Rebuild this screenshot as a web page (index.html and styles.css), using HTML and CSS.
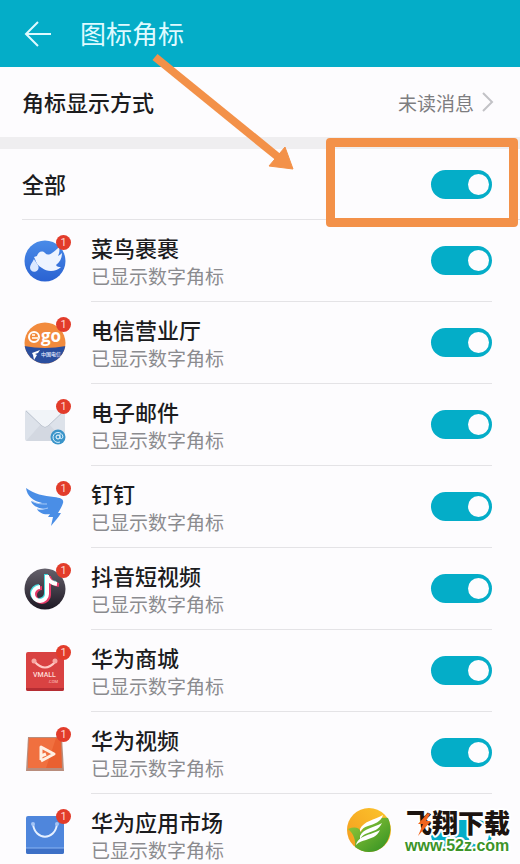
FILE: index.html
```
<!DOCTYPE html>
<html lang="zh-CN">
<head>
    <meta charset="UTF-8">
    <meta name="viewport" content="width=device-width, initial-scale=1.0">
    <title>图标角标</title>
    <link rel="stylesheet" href="styles.css">
</head>
<body>
    <header class="topbar">
        <button class="back" type="button" aria-label="返回">
            <svg width="28" height="28" viewBox="0 0 28 28" fill="none" stroke="#dffaff" stroke-width="2"><path d="M27 14H2M14 2L2 14l12 12"/></svg>
        </button>
        <h1>图标角标</h1>
    </header>

    <main>
        <a class="mode" href="#mode">
            <span class="title">角标显示方式</span>
            <span class="value">未读消息</span>
            <svg width="12" height="20" viewBox="0 0 12 20" fill="none" stroke="#c2c2c6" stroke-width="2"><path d="M1 1l9 9-9 9"/></svg>
        </a>

        <div class="all">
            <label class="title" for="sw-all">全部</label>
            <input class="switch" type="checkbox" id="sw-all" checked>
            <div class="highlight"></div>
        </div>

        <ul class="apps">
            <li class="app">
                <div class="icon">
                    <svg width="42" height="42" viewBox="0 0 42 42">
                        <defs><linearGradient id="gBlue" x1="0" y1="0" x2="0" y2="1"><stop offset="0" stop-color="#4a8be8"/><stop offset="1" stop-color="#2a62d2"/></linearGradient></defs>
                        <circle cx="21" cy="21" r="20.500" fill="url(#gBlue)"/>
                        <path d="M10 17l3-1c1-4 5-6 8-3 2 2 4 2 7 0 3-2 5-4 7-6 1 4 0 7-1 9 2-1 3-2 4-3 0 5-2 9-6 12 1 2 3 2 5 2-5 5-14 5-19 1-4-2-6-5-7-9z" fill="#eef4ff"/>
                        <path d="M10 19c-2 4-4 6-4 8.500a4.300 4.300 0 0 0 8.600 0c0-3-2.600-4.500-4.600-8.500z" fill="#dbe8ff"/>
                    </svg>
                    <span class="badge">1</span>
                </div>
                <div class="info">
                    <label class="title" for="sw-1">菜鸟裹裹</label>
                    <p>已显示数字角标</p>
                </div>
                <input class="switch" type="checkbox" id="sw-1" checked>
            </li>
            <li class="app">
                <div class="icon">
                    <svg width="42" height="42" viewBox="0 0 42 42">
                        <defs><clipPath id="disc"><circle cx="21" cy="21" r="20.500"/></clipPath></defs>
                        <g clip-path="url(#disc)">
                            <path d="M0 0h42v42H0z" fill="#f28b3d"/>
                            <path d="M0 24q21 4 42 0v18H0z" fill="#2a4e9e"/>
                        </g>
                        <text class="go" x="17" y="20">go</text>
                        <circle cx="10" cy="15" r="5" fill="none" stroke="#fff" stroke-width="2"/>
                        <path d="M8 13h3M8 16h7" stroke="#ffe6cf" stroke-width="2"/>
                        <path d="M8 31l8-3-2 3-3 1 2 1-3 5-1-5z" fill="#fff"/>
                        <text class="telecom" x="17" y="34">中国电信</text>
                    </svg>
                    <span class="badge">1</span>
                </div>
                <div class="info">
                    <label class="title" for="sw-2">电信营业厅</label>
                    <p>已显示数字角标</p>
                </div>
                <input class="switch" type="checkbox" id="sw-2" checked>
            </li>
            <li class="app">
                <div class="icon">
                    <svg width="42" height="42" viewBox="0 0 42 42">
                        <rect x="1" y="6" width="40" height="31" rx="2" fill="#dde2ea"/>
                        <path d="M2 37l15-17h8l15 17z" fill="#d3d8e1"/>
                        <path d="M2 6h38L24 22q-3 3-6 0z" fill="#f1f4f8"/>
                        <path d="M2 7l16 15q3 3 6 0L40 7" fill="none" stroke="#bfc6d1"/>
                        <circle cx="34" cy="33" r="7.500" fill="#3a94c9"/>
                        <circle cx="34" cy="33" r="2" fill="none" stroke="#fff"/>
                        <path d="M36 30v4q2 2 3-1a5 5 0 1 0-3 5" fill="none" stroke="#d8f0ff"/>
                    </svg>
                    <span class="badge">1</span>
                </div>
                <div class="info">
                    <label class="title" for="sw-3">电子邮件</label>
                    <p>已显示数字角标</p>
                </div>
                <input class="switch" type="checkbox" id="sw-3" checked>
            </li>
            <li class="app">
                <div class="icon">
                    <svg width="42" height="42" viewBox="0 0 42 42">
                        <path d="M2 2c8 6 18 8 28 9 7 1 10 2 9 6-1 3-3 7-5 10h3c-3 5-6 8-10 13l2-9h-5l2-3c-6 1-11-1-13-5 3 1 5 1 7 0-7-1-12-4-13-8 4 2 7 3 11 2C9 15 3 10 2 2z" fill="#4a8ee6"/>
                        <path d="M8 15c5 3 9 3 15 3M13 23c4 1 7 0 11-1" fill="none" stroke="#a9cbf8"/>
                    </svg>
                    <span class="badge">1</span>
                </div>
                <div class="info">
                    <label class="title" for="sw-4">钉钉</label>
                    <p>已显示数字角标</p>
                </div>
                <input class="switch" type="checkbox" id="sw-4" checked>
            </li>
            <li class="app">
                <div class="icon">
                    <svg width="42" height="42" viewBox="0 0 42 42">
                        <defs><linearGradient id="gDark" x1="0" y1="0" x2="0" y2="1"><stop offset="0" stop-color="#65616b"/><stop offset="1" stop-color="#1e1824"/></linearGradient></defs>
                        <circle cx="21" cy="21" r="20.500" fill="url(#gDark)"/>
                        <g fill="none" stroke-width="4">
                            <path d="M23 7v19a7 7 0 1 1-7-7M23 8q2 7 10 8" stroke="#45d9dc" transform="translate(-1 -1)"/>
                            <path d="M23 7v19a7 7 0 1 1-7-7M23 8q2 7 10 8" stroke="#e63a68" transform="translate(2 1)"/>
                            <path d="M23 7v19a7 7 0 1 1-7-7M23 8q2 7 10 8" stroke="#fff"/>
                        </g>
                    </svg>
                    <span class="badge">1</span>
                </div>
                <div class="info">
                    <label class="title" for="sw-5">抖音短视频</label>
                    <p>已显示数字角标</p>
                </div>
                <input class="switch" type="checkbox" id="sw-5" checked>
            </li>
            <li class="app">
                <div class="icon">
                    <svg width="42" height="42" viewBox="0 0 42 42">
                        <rect x="2" y="2" width="38" height="39" rx="2" fill="#d94242"/>
                        <path d="M2 38h38v1q0 2-2 2H4q-2 0-2-2z" fill="#b52d33"/>
                        <path d="M10 11q11 13 22 0" fill="none" stroke="#ffc9c4" stroke-width="2"/>
                        <circle cx="10" cy="11" r="2.500" fill="#f6a9a4"/><circle cx="31" cy="11" r="2.500" fill="#f6a9a4"/>
                        <text class="vmall" x="9" y="27">VMALL</text>
                        <text class="vcom" x="24" y="33">.COM</text>
                    </svg>
                    <span class="badge">1</span>
                </div>
                <div class="info">
                    <label class="title" for="sw-6">华为商城</label>
                    <p>已显示数字角标</p>
                </div>
                <input class="switch" type="checkbox" id="sw-6" checked>
            </li>
            <li class="app">
                <div class="icon">
                    <svg width="42" height="42" viewBox="0 0 42 42">
                        <path d="M4 5h34l2 34H2z" fill="#b98d7d"/>
                        <path d="M5 6h32l1 30H4z" fill="#ea6030"/>
                        <path d="M5 6h27L22 36H4z" fill="#f0703f"/>
                        <path d="M17 28V15l13 7-13 7M17 24l5-2" fill="none" stroke="#fff0e4" stroke-width="3" stroke-linejoin="round"/>
                    </svg>
                    <span class="badge">1</span>
                </div>
                <div class="info">
                    <label class="title" for="sw-7">华为视频</label>
                    <p>已显示数字角标</p>
                </div>
                <input class="switch" type="checkbox" id="sw-7" checked>
            </li>
            <li class="app">
                <div class="icon">
                    <svg width="42" height="42" viewBox="0 0 42 42">
                        <rect x="2" y="2" width="38" height="38" rx="2" fill="#4f86dc"/>
                        <path d="M2 34h38v4q0 2-2 2H4q-2 0-2-2z" fill="#3d70c6"/>
                        <path d="M2 34h38" stroke="#8bb4f2"/>
                        <path d="M9 10c2 17 22 17 24 0" fill="none" stroke="#e6f0ff" stroke-width="2"/>
                        <circle cx="9" cy="10" r="2" fill="#a5c5f5"/><circle cx="33" cy="10" r="2" fill="#a5c5f5"/>
                    </svg>
                    <span class="badge">1</span>
                </div>
                <div class="info">
                    <label class="title" for="sw-8">华为应用市场</label>
                    <p>已显示数字角标</p>
                </div>
                <input class="switch" type="checkbox" id="sw-8" checked>
                <svg class="watermark" width="172" height="56" viewBox="0 0 172 56">
                    <defs><linearGradient id="gSun" x1="0" y1="1" x2="1" y2="0"><stop offset="0" stop-color="#f39a1e"/><stop offset="1" stop-color="#fcc62c"/></linearGradient>
                    <linearGradient id="gLeaf" x1="0" y1="0" x2="1" y2="1"><stop offset="0" stop-color="#9bcb3a"/><stop offset="1" stop-color="#2f8f22"/></linearGradient></defs>
                    <circle cx="29" cy="26" r="22" fill="url(#gSun)"/>
                    <path d="M8 25q10-4 13 3C26 18 36 13 48 14c7 15-2 34-19 34-5 0-10-2-14-5 1-6-1-13-7-18z" fill="url(#gLeaf)"/>
                    <path d="M20 25c4-8 14-9 23-14-2 7-9 9-15 11-4 1-6 3-8 6zM20 32c4-8 13-8 22-13-3 7-9 8-14 10-4 1-6 3-8 6zM16 41c2-9 14-10 24-15-3 7-9 8-14 10-4 1-7 2-10 5z" fill="#fff"/>
                    <text class="brand" x="66" y="29">飞翔下载</text>
                    <path d="M88 9l-10 11h5l-5 12 13-15h-5l4-7z" fill="#f0641e"/>
                    <text class="site" x="65" y="47">www.52z.com</text>
                </svg>
            </li>
        </ul>
    </main>

    <svg class="pointer" width="144" height="122" viewBox="0 0 144 122">
        <path d="M5 5L128 105" stroke="#f39149" stroke-width="8"/>
        <path d="M135 95l8 22-24-3z" fill="#f39149" stroke="#f39149"/>
    </svg>
</body>
</html>
```
FILE: styles.css
```
* {
    box-sizing: border-box;
}
body {
    margin: 0;
    position: relative;
    background: #fdfcfe;
    color: #1c1c1e;
    font-family: Roboto, "Noto Sans CJK SC", sans-serif;
    overflow-x: hidden;
}
.topbar {
    display: flex;
    align-items: center;
    gap: 28px;
    height: 67px;
    padding: 0 24px;
    background: #04adc8;
}
.back {
    display: flex;
    padding: 0;
    border: none;
    background: none;
    cursor: pointer;
}
h1 {
    margin: 0;
    padding-top: 2px;
    color: #dffaff;
    font-size: 26px;
    font-weight: 400;
    line-height: 32px;
}
.title {
    padding-top: 4px;
    font-size: 22px;
    font-weight: 500;
    line-height: 28px;
}
.mode {
    display: flex;
    align-items: center;
    gap: 8px;
    height: 82px;
    padding: 0 26px 0 22px;
    border-bottom: 12px solid #efeef0;
    color: inherit;
    text-decoration: none;
}
.mode .title {
    flex: 1;
}
.value {
    color: #7d7d80;
    font-size: 19px;
}
.all {
    position: relative;
    display: flex;
    align-items: center;
    justify-content: space-between;
    height: 71px;
    margin-left: 22px;
    padding-right: 28px;
    border-bottom: 1px solid #e4e3e6;
}
/* orange frame around the master switch */
.highlight {
    position: absolute;
    top: -11px;
    right: 2px;
    width: 192px;
    height: 89px;
    border: 9px solid #f39149;
    border-radius: 4px;
    pointer-events: none;
}
.switch {
    appearance: none;
    display: flex;
    align-items: center;
    justify-content: flex-end;
    flex: none;
    width: 61px;
    height: 29px;
    margin: 0;
    padding: 0 3px;
    border-radius: 15px;
    background: #b8b8bc;
    cursor: pointer;
}
.switch::before {
    content: "";
    width: 21px;
    height: 21px;
    border-radius: 50%;
    background: #fdfcfe;
}
.switch:checked {
    background: #04adc8;
}
.switch:not(:checked) {
    justify-content: flex-start;
}
.apps {
    margin: 0;
    padding: 0;
    list-style: none;
}
.app {
    position: relative;
    display: flex;
    height: 82px;
    padding-left: 24px;
}
.icon {
    position: relative;
    width: 42px;
    height: 42px;
    margin: 20px 25px 0 0;
}
.icon svg {
    display: block;
}
.badge {
    position: absolute;
    top: -5px;
    right: -5px;
    width: 15px;
    height: 15px;
    border-radius: 50%;
    background: #e23c2b;
    color: #ffd9d2;
    font-size: 11px;
    line-height: 15px;
    text-align: center;
}
.info {
    flex: 1;
    padding-top: 12px;
    border-bottom: 1px solid #e4e3e6;
}
.info .title {
    display: block;
}
.info p {
    margin: 0;
    color: #8b8b8f;
    font-size: 19px;
    line-height: 28px;
}
.app .switch {
    margin: 26px 28px 0 0;
}
.app::after {
    content: "";
    position: absolute;
    right: 28px;
    bottom: 0;
    width: 61px;
    height: 1px;
    background: #e4e3e6;
}
.go {
    fill: #fff;
    font: 700 17px "Open Sans", sans-serif;
}
.telecom {
    fill: #e4ebff;
    font: 500 5px "Noto Sans CJK SC", sans-serif;
}
.vmall {
    fill: #ffdcd6;
    font: 500 7px Roboto, sans-serif;
}
.vcom {
    fill: #ffc9c4;
    font: 400 4px Roboto, sans-serif;
}
/* site mark over the last row */
.watermark {
    position: absolute;
    top: 10px;
    right: 8px;
}
.brand, .site {
    stroke: #fff;
    stroke-width: 4px;
    stroke-linejoin: round;
    paint-order: stroke;
}
.brand {
    fill: #1c1410;
    font: 900 26px "Noto Sans CJK SC", sans-serif;
}
.site {
    fill: #3c9429;
    font: 700 16px "Liberation Sans", sans-serif;
}
.pointer {
    position: absolute;
    top: 52px;
    left: 150px;
    pointer-events: none;
}
```
